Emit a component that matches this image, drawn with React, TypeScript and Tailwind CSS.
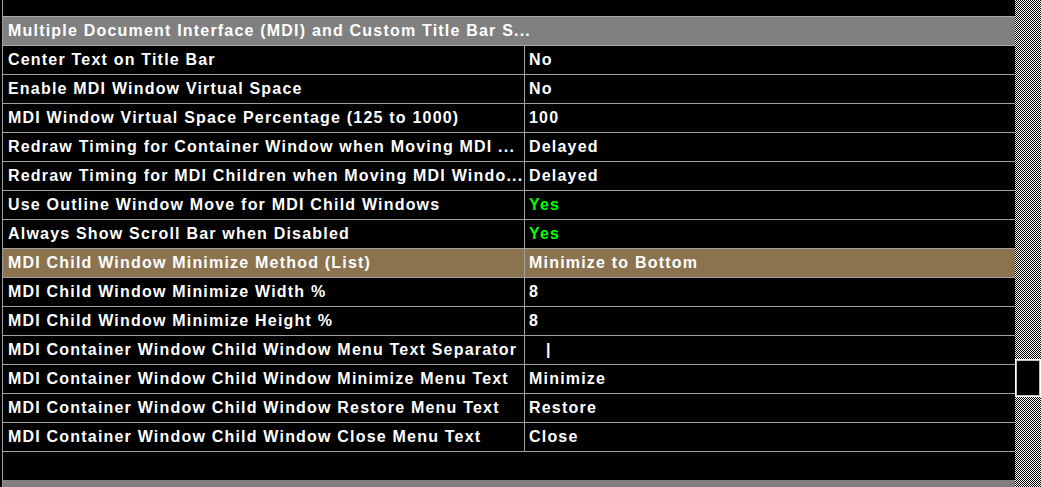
const rows: { label: string; value: string; tone?: "green" | "sel" }[] = [
  { label: "Center Text on Title Bar", value: "No" },
  { label: "Enable MDI Window Virtual Space", value: "No" },
  { label: "MDI Window Virtual Space Percentage (125 to 1000)", value: "100" },
  { label: "Redraw Timing for Container Window when Moving MDI ...", value: "Delayed" },
  { label: "Redraw Timing for MDI Children when Moving MDI Windo...", value: "Delayed" },
  { label: "Use Outline Window Move for MDI Child Windows", value: "Yes", tone: "green" },
  { label: "Always Show Scroll Bar when Disabled", value: "Yes", tone: "green" },
  { label: "MDI Child Window Minimize Method (List)", value: "Minimize to Bottom", tone: "sel" },
  { label: "MDI Child Window Minimize Width %", value: "8" },
  { label: "MDI Child Window Minimize Height %", value: "8" },
  { label: "MDI Container Window Child Window Menu Text Separator", value: "\u00a0\u00a0\u00a0|" },
  { label: "MDI Container Window Child Window Minimize Menu Text", value: "Minimize" },
  { label: "MDI Container Window Child Window Restore Menu Text", value: "Restore" },
  { label: "MDI Container Window Child Window Close Menu Text", value: "Close" },
];

export default function App() {
  return (
    <div
      className="flex h-[487px] w-[1041px] overflow-hidden bg-black text-[16px] font-bold tracking-[1.2px] text-white"
      style={{ fontFamily: '"Liberation Sans", Arial, sans-serif' }}
    >
      <div className="w-[2px] shrink-0 bg-black" />
      <div className="w-px shrink-0 bg-[#a0a0a0]" />

      <div className="flex min-w-0 flex-1 flex-col">
        <div className="h-4 shrink-0" />
        <div className="flex h-[30px] shrink-0 items-center overflow-hidden whitespace-nowrap border-y border-[#a8a8a8] bg-[#808080] pl-[5px]">
          Multiple Document Interface (MDI) and Custom Title Bar S...
        </div>

        {rows.map((row) => (
          <div
            key={row.label}
            className={`flex h-[29px] shrink-0 border-b border-[#a0a0a0] ${row.tone === "sel" ? "bg-[#8b7350]" : ""}`}
          >
            <div className="flex w-[522px] shrink-0 items-center overflow-hidden whitespace-nowrap border-r border-[#a0a0a0] pl-[5px]">
              {row.label}
            </div>
            <div
              className={`flex flex-1 items-center whitespace-pre pl-[4px] ${row.tone === "green" ? "text-[#00ff00]" : ""}`}
            >
              {row.value}
            </div>
          </div>
        ))}

        <div className="flex-1" />
        <div className="h-[7px] shrink-0 bg-[#808080]" />
      </div>

      {/* dithered scrollbar track */}
      <div className="relative flex w-[26px] shrink-0 flex-col">
        <svg className="absolute inset-0 h-full w-full" shapeRendering="crispEdges">
          <defs>
            <pattern id="dither" width="2" height="2" patternUnits="userSpaceOnUse">
              <rect width="2" height="2" fill="#000" />
              <rect x="0" y="0" width="1" height="1" fill="#fff" />
              <rect x="1" y="1" width="1" height="1" fill="#fff" />
            </pattern>
          </defs>
          <rect width="100%" height="100%" fill="url(#dither)" />
        </svg>
        <div className="h-[359px] shrink-0" />
        <div className="relative h-[38px] shrink-0 border border-white bg-black outline outline-1 -outline-offset-2 outline-[#c0c0c0]" />
      </div>
    </div>
  );
}
